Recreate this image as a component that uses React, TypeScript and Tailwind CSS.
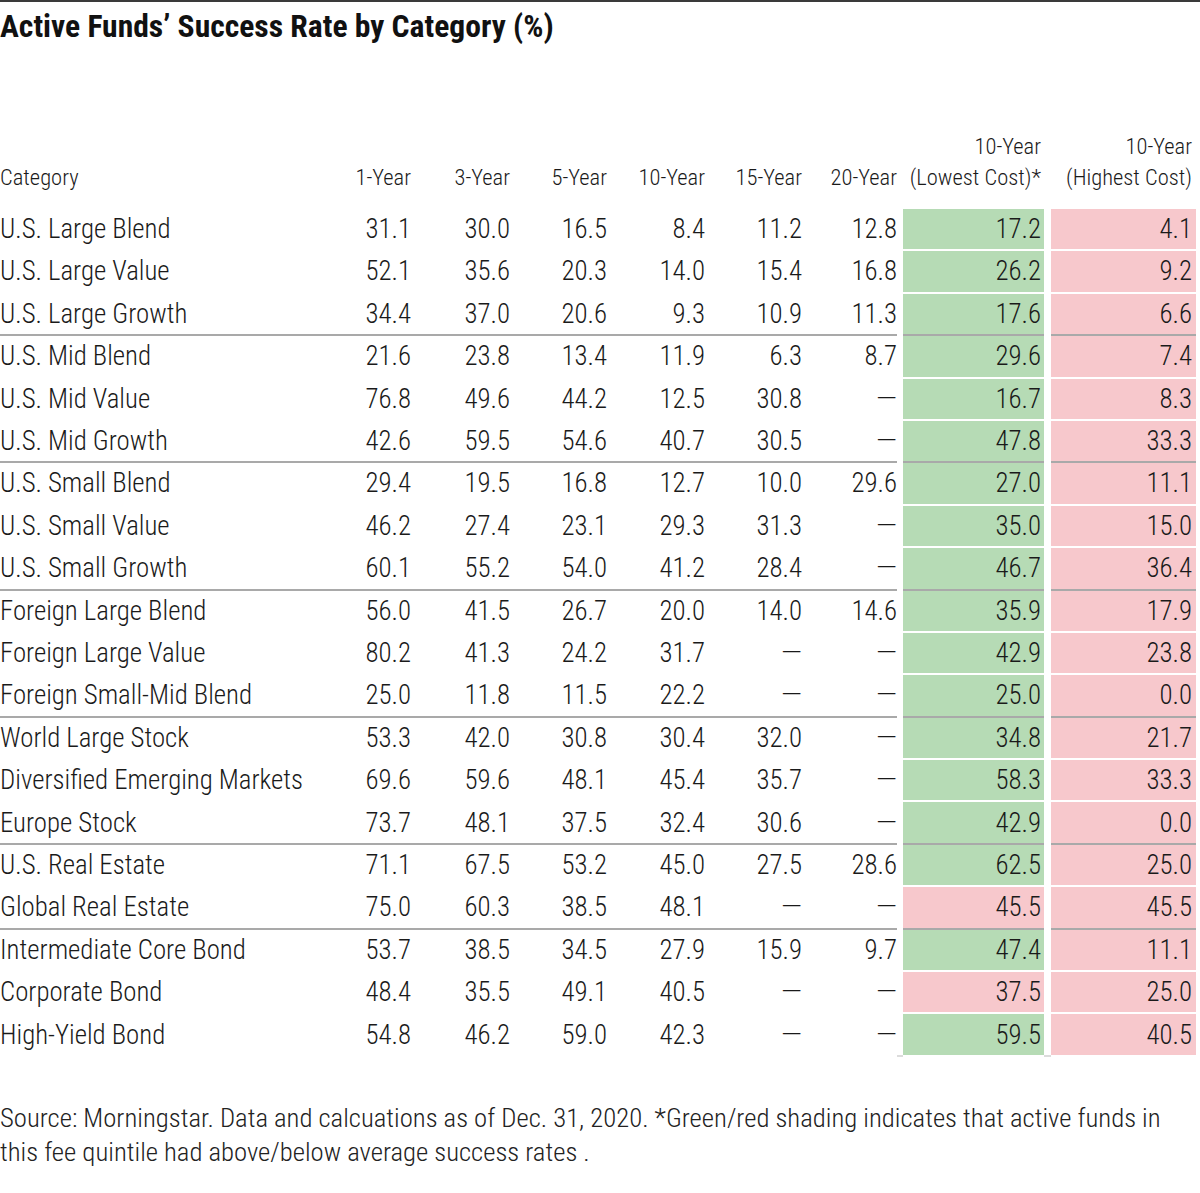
import React from 'react';

type Shade = 'g' | 'r';

interface Row {
  category: string;
  values: (number | null)[];
  low: number;
  lowShade: Shade;
  high: number;
  groupEnd?: boolean;
}

const rows: Row[] = [
  { category: 'U.S. Large Blend', values: [31.1, 30.0, 16.5, 8.4, 11.2, 12.8], low: 17.2, lowShade: 'g', high: 4.1 },
  { category: 'U.S. Large Value', values: [52.1, 35.6, 20.3, 14.0, 15.4, 16.8], low: 26.2, lowShade: 'g', high: 9.2 },
  { category: 'U.S. Large Growth', values: [34.4, 37.0, 20.6, 9.3, 10.9, 11.3], low: 17.6, lowShade: 'g', high: 6.6, groupEnd: true },
  { category: 'U.S. Mid Blend', values: [21.6, 23.8, 13.4, 11.9, 6.3, 8.7], low: 29.6, lowShade: 'g', high: 7.4 },
  { category: 'U.S. Mid Value', values: [76.8, 49.6, 44.2, 12.5, 30.8, null], low: 16.7, lowShade: 'g', high: 8.3 },
  { category: 'U.S. Mid Growth', values: [42.6, 59.5, 54.6, 40.7, 30.5, null], low: 47.8, lowShade: 'g', high: 33.3, groupEnd: true },
  { category: 'U.S. Small Blend', values: [29.4, 19.5, 16.8, 12.7, 10.0, 29.6], low: 27.0, lowShade: 'g', high: 11.1 },
  { category: 'U.S. Small Value', values: [46.2, 27.4, 23.1, 29.3, 31.3, null], low: 35.0, lowShade: 'g', high: 15.0 },
  { category: 'U.S. Small Growth', values: [60.1, 55.2, 54.0, 41.2, 28.4, null], low: 46.7, lowShade: 'g', high: 36.4, groupEnd: true },
  { category: 'Foreign Large Blend', values: [56.0, 41.5, 26.7, 20.0, 14.0, 14.6], low: 35.9, lowShade: 'g', high: 17.9 },
  { category: 'Foreign Large Value', values: [80.2, 41.3, 24.2, 31.7, null, null], low: 42.9, lowShade: 'g', high: 23.8 },
  { category: 'Foreign Small-Mid Blend', values: [25.0, 11.8, 11.5, 22.2, null, null], low: 25.0, lowShade: 'g', high: 0.0, groupEnd: true },
  { category: 'World Large Stock', values: [53.3, 42.0, 30.8, 30.4, 32.0, null], low: 34.8, lowShade: 'g', high: 21.7 },
  { category: 'Diversified Emerging Markets', values: [69.6, 59.6, 48.1, 45.4, 35.7, null], low: 58.3, lowShade: 'g', high: 33.3 },
  { category: 'Europe Stock', values: [73.7, 48.1, 37.5, 32.4, 30.6, null], low: 42.9, lowShade: 'g', high: 0.0, groupEnd: true },
  { category: 'U.S. Real Estate', values: [71.1, 67.5, 53.2, 45.0, 27.5, 28.6], low: 62.5, lowShade: 'g', high: 25.0 },
  { category: 'Global Real Estate', values: [75.0, 60.3, 38.5, 48.1, null, null], low: 45.5, lowShade: 'r', high: 45.5, groupEnd: true },
  { category: 'Intermediate Core Bond', values: [53.7, 38.5, 34.5, 27.9, 15.9, 9.7], low: 47.4, lowShade: 'g', high: 11.1 },
  { category: 'Corporate Bond', values: [48.4, 35.5, 49.1, 40.5, null, null], low: 37.5, lowShade: 'r', high: 25.0 },
  { category: 'High-Yield Bond', values: [54.8, 46.2, 59.0, 42.3, null, null], low: 59.5, lowShade: 'g', high: 40.5 },
];

const periods = ['1-Year', '3-Year', '5-Year', '10-Year', '15-Year', '20-Year'];

// category | 6 periods | lowest cost (6px gap inside) | highest cost (7px gap inside)
const cols = 'grid grid-cols-[314px_97px_99px_97px_98px_97px_95px_147px_152px]';

const Value: React.FC<{ v: number | null }> = ({ v }) =>
  v === null ? <span className="font-['Roboto',_sans-serif] font-light">—</span> : <>{v.toFixed(1)}</>;

const App: React.FC = () => {
  const lineColor = (row: Row) => (row.groupEnd ? 'border-[#a9a9a9]' : 'border-white');

  return (
    <div className="w-[1200px] bg-white text-[#1a1a1a] font-['Roboto_Condensed',_'Roboto',_sans-serif] font-light">
      <div className="h-[2px] bg-[#3a3a3a]" />
      <h1 className="pt-[6px] text-[31.6px] leading-[38px] font-bold text-[#111]">
        Active Funds’ Success Rate by Category (%)
      </h1>

      {/* Header */}
      <div className={`${cols} mt-[85px] pb-[16px] items-end text-[22.5px] leading-[31px]`}>
        <div>Category</div>
        {periods.map((p) => (
          <div key={p} className="text-right">
            {p}
          </div>
        ))}
        <div className="text-right pr-[3px] ml-[6px]">
          10-Year
          <br />
          (Lowest Cost)*
        </div>
        <div className="text-right pr-[4px] ml-[7px] whitespace-nowrap">
          10-Year
          <br />
          (Highest Cost)
        </div>
      </div>

      {/* Body */}
      <div className="text-[26.8px]">
        {rows.map((row) => (
          <div key={row.category} className={`${cols} h-[42.4px]`}>
            <div className={`border-b-2 ${lineColor(row)} flex items-center whitespace-nowrap`}>{row.category}</div>
            {row.values.map((v, i) => (
              <div key={i} className={`border-b-2 ${lineColor(row)} flex items-center justify-end`}>
                <Value v={v} />
              </div>
            ))}
            <div
              className={`border-b-2 ${lineColor(row)} ml-[6px] pr-[3px] flex items-center justify-end ${
                row.lowShade === 'g' ? 'bg-[#b6dbb5]' : 'bg-[#f7c8cc]'
              }`}
            >
              <Value v={row.low} />
            </div>
            <div className={`border-b-2 ${lineColor(row)} ml-[7px] pr-[4px] flex items-center justify-end bg-[#f7c8cc]`}>
              <Value v={row.high} />
            </div>
          </div>
        ))}
        <div className="ml-[896px] w-[300px] h-[2px] bg-[#dcdcdc] -mt-[2px]" />
      </div>

      {/* Footer */}
      <p className="mt-[44px] pb-[26px] text-[26.7px] leading-[34px] text-[#222] whitespace-nowrap">
        Source: Morningstar. Data and calcuations as of Dec. 31, 2020. *Green/red shading indicates that active funds in
        <br />
        this fee quintile had above/below average success rates .
      </p>
    </div>
  );
};

export default App;
